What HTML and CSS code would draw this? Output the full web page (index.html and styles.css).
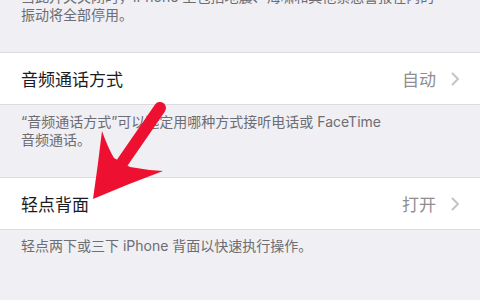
FILE: index.html
```html
<!DOCTYPE html>
<html>
<head>
<meta charset="UTF-8">
<meta name="viewport" content="width=device-width, initial-scale=1">
<link rel="stylesheet" href="styles.css">
</head>
<body>

<div class="note note-top">
  当此开关关闭时，iPhone 上包括地震、海啸和其他紧急警报在内的<br>振动将全部停用。
</div>

<div class="group">
  <div class="row">
    <span class="label">音频通话方式</span>
    <span class="value">自动</span>
    <svg class="chevron" width="9" height="14" viewBox="0 0 9 14"><polyline points="1.5,1.5 7,7 1.5,12.5" /></svg>
  </div>
</div>

<div class="note">
  “音频通话方式”可以选定用哪种方式接听电话或 FaceTime<br>音频通话。
</div>

<div class="group">
  <div class="row">
    <span class="label">轻点背面</span>
    <span class="value">打开</span>
    <svg class="chevron" width="9" height="14" viewBox="0 0 9 14"><polyline points="1.5,1.5 7,7 1.5,12.5" /></svg>
  </div>
</div>

<div class="note note-last">
  轻点两下或三下 iPhone 背面以快速执行操作。
</div>

<!-- red arrow drawn on top of the screenshot -->
<svg class="arrow" width="480" height="300" viewBox="0 0 480 300">
  <line x1="160" y1="108" x2="122" y2="163" />
  <path d="M93 199 Q98 165 102 131 Q108 148 114 158 L130 167 Q146 170 163 171 Q128 184 93 199 Z" />
</svg>

</body>
</html>
```

FILE: styles.css
```css
body {
  margin: 0;
  background-color: #efeff4;
  font-family: Inter, "Noto Sans CJK SC", sans-serif;
  position: relative;
  height: 300px;
  overflow: hidden;
}

.note {
  padding: 8px 21px 28px 21px;
  font-size: 14px;
  line-height: 18px;
  color: #6d6d72;
}

.note-top {
  margin-top: -12px;
  padding-top: 0;
}

.note-last {
  padding-top: 7px;
}

.group {
  background-color: #fff;
  border-top: 1px solid #dcdce0;
  border-bottom: 1px solid #dcdce0;
}

.row {
  display: flex;
  align-items: center;
  height: 51px;
  padding: 0 20px 0 21px;
}

.label {
  flex: 1;
  font-size: 17px;
  color: #1c1c1e;
}

.value {
  font-size: 17px;
  color: #8e8e93;
  margin-right: 15px;
}

.chevron polyline {
  fill: none;
  stroke: #c4c4c9;
  stroke-width: 2;
  stroke-linecap: round;
  stroke-linejoin: round;
}

.arrow {
  position: absolute;
  left: 0;
  top: 0;
  pointer-events: none;
}

.arrow line {
  stroke: #ee1030;
  stroke-width: 12;
  stroke-linecap: round;
}

.arrow path {
  fill: #ee1030;
}
```
